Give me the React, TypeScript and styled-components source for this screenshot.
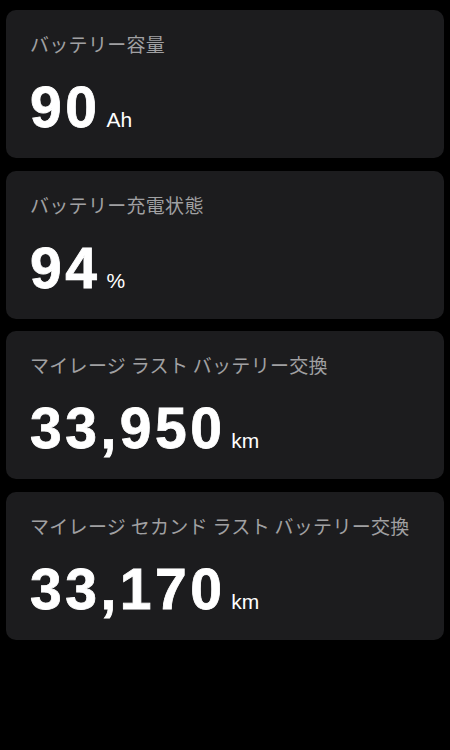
import React from 'react'
import styled, { createGlobalStyle } from 'styled-components'

const GlobalStyle = createGlobalStyle`
    html, body {
        margin: 0;
        padding: 0;
        background: #000;
    }
    body {
        font-family: "Liberation Sans", "Noto Sans CJK JP", sans-serif;
        -webkit-font-smoothing: antialiased;
    }
`

const Page = styled.main`
    min-height: 750px;
    box-sizing: border-box;
    padding: 10px 6px;
    display: flex;
    flex-direction: column;
    gap: 12.5px;
    background: #000;
`

const Card = styled.section`
    height: 148px;
    box-sizing: border-box;
    padding: 22px 24px;
    border-radius: 10px;
    background-color: #1c1c1e;
    display: flex;
    flex-direction: column;
`

const Label = styled.div`
    font-family: "Noto Sans CJK JP", "Liberation Sans", sans-serif;
    font-size: 19px;
    line-height: 24px;
    letter-spacing: 0.3px;
    color: #a0a0a2;
    white-space: nowrap;
`

const ValueRow = styled.div`
    margin-top: 23px;
    display: flex;
    align-items: baseline;
    gap: 6px;
    color: #fff;
`

const Value = styled.span`
    font-family: "Liberation Sans", Arial, sans-serif;
    font-size: 57px;
    line-height: 57px;
    font-weight: 700;
    letter-spacing: 3.5px;
    -webkit-text-stroke: 0.8px #fff;
`

const Unit = styled.span`
    font-family: "Liberation Sans", Arial, sans-serif;
    font-size: 21px;
    font-weight: 400;
`

const stats = [
    { label: 'バッテリー容量', value: '90', unit: 'Ah' },
    { label: 'バッテリー充電状態', value: '94', unit: '%' },
    { label: 'マイレージ ラスト バッテリー交換', value: '33,950', unit: 'km' },
    { label: 'マイレージ セカンド ラスト バッテリー交換', value: '33,170', unit: 'km' },
]

const App = () => {
    return (
        <>
            <GlobalStyle />
            <Page>
                {stats.map((s) => (
                    <Card key={s.label}>
                        <Label>{s.label}</Label>
                        <ValueRow>
                            <Value>{s.value}</Value>
                            <Unit>{s.unit}</Unit>
                        </ValueRow>
                    </Card>
                ))}
            </Page>
        </>
    )
}

export default App
